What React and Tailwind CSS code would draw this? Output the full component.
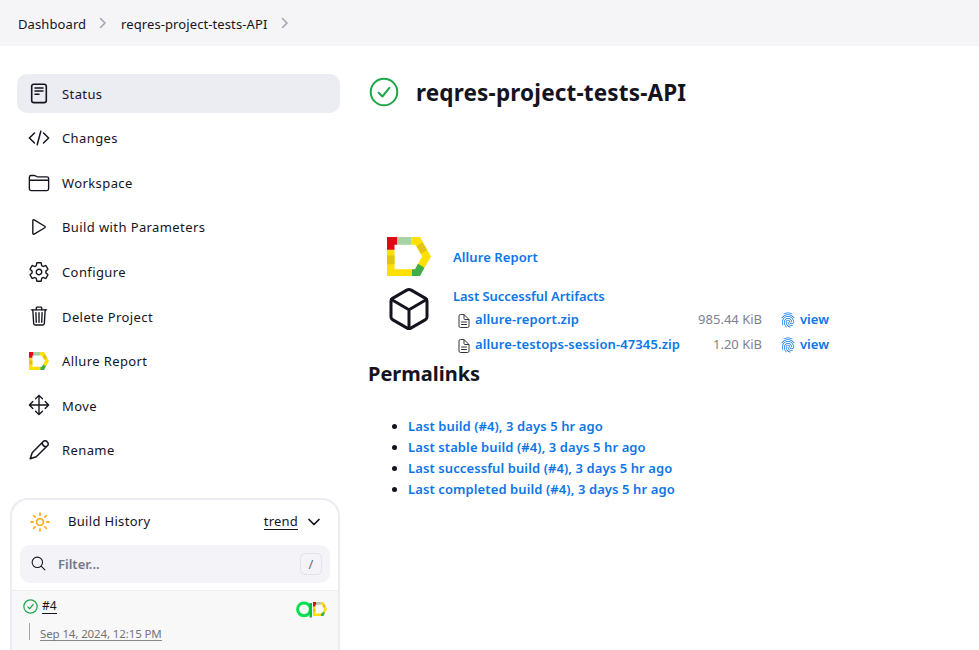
import React from "react";
import {
  IoFolderOutline,
  IoPlayOutline,
  IoSettingsOutline,
  IoTrashOutline,
  IoMoveOutline,
  IoCubeOutline,
  IoSearchOutline,
  IoSunnyOutline,
  IoDocumentTextOutline,
  IoFingerPrintOutline,
} from "react-icons/io5";

function StatusIcon() {
  return (
    <svg width="22" height="22" viewBox="0 0 22 22" fill="none" stroke="currentColor" strokeLinecap="round">
      <rect x="3.7" y="1.2" width="14.600" height="18.400" rx="2.200" strokeWidth="1.600" />
      <path d="M7 4.900h8M7 7.900h8M7 11.300h4" strokeWidth="1.500" />
    </svg>
  );
}

function CodeIcon() {
  return (
    <svg width="22" height="22" viewBox="0 0 22 22" fill="none" stroke="currentColor" strokeWidth="1.5" strokeLinecap="round" strokeLinejoin="round">
      <path d="M6.5 6 1.4 11l5.1 5M15.5 6l5.1 5-5.1 5M12.8 4.2 9.2 17.8" />
    </svg>
  );
}

function PencilIcon() {
  return (
    <svg width="22" height="22" viewBox="0 0 22 22" fill="none" stroke="currentColor" strokeWidth="1.5" strokeLinecap="round" strokeLinejoin="round">
      <path d="M2.200 19.800l2-6L15 2.800a2.600 2.600 0 0 1 4.200 0 2.600 2.600 0 0 1 0 4.200L8.200 17.800zM14.200 3.600c.200 2.200 1.800 4 4.200 4.200" />
    </svg>
  );
}

function AllureIcon({ className }) {
  return (
    <svg className={className} viewBox="0 0 44 40" preserveAspectRatio="none">
      <path fill="#ffe000" d="M0 13h7.500v20h17.500v7H0zM24.500 0h8.500L44 20 36.500 33l-6.300-4 5-9-6.700-12h-4z" />
      <path fill="#e2c412" d="M0 19h7.500v9H0zM29.500 9.500l6-4 4.500 8-6.200 3.700z" />
      <path fill="#e30613" d="M0 0h10v8H7.500v5H0z" />
      <path fill="#a6d3a3" d="M10 0h14.500v8H10z" />
      <path fill="#3fae49" d="M25 33h3l3-5.500 6.500 4L33 40h-8z" />
    </svg>
  );
}

function SuccessIcon({ className, stroke }) {
  return (
    <svg className={className} viewBox="0 0 30 30" fill="none" stroke="#1ea64b" strokeWidth={stroke} strokeLinecap="round" strokeLinejoin="round">
      <circle cx="15" cy="15" r="13.3" />
      <path d="M9.700 15.700l3.700 3.800 7-8.700" />
    </svg>
  );
}

function Chevron() {
  return (
    <svg width="8" height="12" viewBox="0 0 8 12" fill="none" stroke="#a5a5b5" strokeWidth="1.6" strokeLinecap="round" strokeLinejoin="round">
      <path d="M1.500 1.500 6 6l-4.500 4.500" />
    </svg>
  );
}

const ionicon = "size-[22px]";
const menu = [
  { label: "Status", icon: <StatusIcon />, active: true },
  { label: "Changes", icon: <CodeIcon /> },
  { label: "Workspace", icon: <IoFolderOutline className={ionicon} /> },
  { label: "Build with Parameters", icon: <IoPlayOutline className={ionicon} /> },
  { label: "Configure", icon: <IoSettingsOutline className={ionicon} /> },
  { label: "Delete Project", icon: <IoTrashOutline className={ionicon} /> },
  { label: "Allure Report", icon: <AllureIcon className="h-[18px] w-5" /> },
  { label: "Move", icon: <IoMoveOutline className={ionicon} /> },
  { label: "Rename", icon: <PencilIcon /> },
];

const artifacts = [
  { name: "allure-report.zip", size: "985.44 KiB" },
  { name: "allure-testops-session-47345.zip", size: "1.20 KiB" },
];

const permalinks = [
  "Last build (#4), 3 days 5 hr ago",
  "Last stable build (#4), 3 days 5 hr ago",
  "Last successful build (#4), 3 days 5 hr ago",
  "Last completed build (#4), 3 days 5 hr ago",
];

function BuildHistory() {
  return (
    <section className="ml-[10px] mt-[29px] h-[152px] w-[330px] overflow-hidden rounded-t-[18px] border-2 border-b-0 border-[#ebebf2]">
      <div className="flex h-[45px] items-center pb-[2px] pl-[17px] pr-[18px]">
        <IoSunnyOutline className="size-[22px] text-[#fdb022] [&_*]:[stroke-width:42px]" />
        <span className="-mt-[2px] ml-[17px] text-[13px] leading-5 tracking-[0.320px]">Build History</span>
        <a className="ml-auto mt-px border-b border-[#14141f] text-[13px] leading-[15px] tracking-[0.200px]">trend</a>
        <svg className="ml-[10px] mt-px" width="12" height="8" viewBox="0 0 12 8" fill="none" stroke="currentColor" strokeWidth="1.7" strokeLinecap="round" strokeLinejoin="round">
          <path d="M1 1.500l5 5 5-5" />
        </svg>
      </div>
      <div className="mx-2 flex h-[38px] items-center rounded-[10px] bg-[#f3f3f8] pl-[10px] pr-2">
        <IoSearchOutline className="-mt-px size-[17px]" />
        <span className="ml-[11px] text-[13px] font-semibold text-[#75758f]">Filter...</span>
        <kbd className="ml-auto flex h-[22px] w-[22px] items-center justify-center rounded-[5px] border border-[#e2e2ea] font-['Noto_Sans',sans-serif] text-[13px] text-[#696980]">/</kbd>
      </div>
      <div className="mt-[7px] h-[70px] border-t border-[#ededf0] bg-[#f8f8f8] pl-[11px] pr-[11px] pt-[7px]">
        <div className="flex h-4 items-center">
          <SuccessIcon className="size-[15px]" stroke="2.4" />
          <a className="ml-1 mt-px border-b border-[#14141f] text-xs leading-[14px]">#4</a>
          <svg className="ml-auto mt-[6px]" width="17" height="17" viewBox="0 0 17 17" fill="none" stroke="#00e04f" strokeWidth="3">
            <circle cx="8" cy="8.300" r="6.400" />
            <path d="M14.800 2v14.500" stroke="#12b83f" strokeWidth="2.500" />
          </svg>
          <AllureIcon className="mt-[6px] h-[14px] w-[14px]" />
        </div>
        <div className="ml-[6px] mt-[9px] flex h-[17px] border-l border-[#9ba7b0] pl-[10px]">
          <a className="mt-[3px] h-[15px] border-b border-[#85858a] text-[11.500px] leading-[15px] tracking-[-0.120px] text-[#737378]">Sep 14, 2024, 12:15 PM</a>
        </div>
      </div>
    </section>
  );
}

export default function App() {
  return (
    <div className="h-[650px] w-[979px] overflow-hidden bg-white font-['Noto_Sans',sans-serif] text-[#14141f]">
      <header className="flex h-[46px] items-center bg-[#f5f5f8] pl-[18px] pt-[2px] text-[13px] tracking-[0.100px]">
        <a className="w-[68px] whitespace-nowrap pt-[2px]">Dashboard</a>
        <span className="-mt-[2px] ml-[13px]"><Chevron /></span>
        <a className="ml-[14px] w-[147px] whitespace-nowrap pt-[2px]">reqres-project-tests-API</a>
        <span className="-mt-[2px] ml-[13px]"><Chevron /></span>
      </header>
      <div className="flex">
        <aside className="w-[340px] shrink-0 pt-7">
          <nav className="ml-[17px] flex flex-col gap-[5.560px]">
            {menu.map((m) => (
              <a key={m.label} className={`flex h-[39px] items-center rounded-[10px] pl-[11px] ${m.active ? "bg-[#ecedf3]" : ""}`}>
                <span className="flex w-[22px] justify-center">{m.icon}</span>
                <span className="ml-3 pt-[0.600px] text-[13px] leading-5 tracking-[0.400px]">{m.label}</span>
              </a>
            ))}
          </nav>
          <BuildHistory />
        </aside>
        <main className="pl-7 pt-[31px]">
          <div className="flex h-[30px] items-center">
            <SuccessIcon className="size-[30px] ml-[1px]" stroke="2" />
            <h1 className="ml-[17px] pt-[2px] text-[22.500px] font-bold leading-[30px] tracking-[0.160px]">reqres-project-tests-API</h1>
          </div>
          <div className="mt-[130px] flex h-10 items-center">
            <AllureIcon className="-mt-px ml-[19px] h-[39px] w-11" />
            <a className="ml-[22px] pt-px text-[13px] font-semibold tracking-[0.080px] text-[#0b76e8]">Allure Report</a>
          </div>
          <div className="mt-[8px] flex h-[72px]">
            <IoCubeOutline className="ml-[17px] size-12" />
            <div className="ml-5 pt-px text-[13px] font-semibold text-[#0b76e8]">
              <a className="block h-[21px] leading-5 tracking-[-0.050px]">Last Successful Artifacts</a>
              {artifacts.map((a) => (
                <div key={a.name} className="flex h-[25px] items-center">
                  <IoDocumentTextOutline className="ml-[3px] mt-[2px] size-4 text-[#33333c]" />
                  <a className="ml-[3px] w-[210px] whitespace-nowrap tracking-[0.110px]">{a.name}</a>
                  <span className="w-[77px] text-right font-normal text-[#808090]">{a.size}</span>
                  <IoFingerPrintOutline className="ml-[18px] size-4" />
                  <a className="ml-1">view</a>
                </div>
              ))}
            </div>
          </div>
          <h2 className="mt-[2px] h-[30px] text-[20px] font-bold leading-[30px]">Permalinks</h2>
          <ul className="mt-[27px] list-disc pl-10 text-[13px] font-semibold leading-[21px] tracking-[0.100px]">
            {permalinks.map((p) => (
              <li key={p}><a className="text-[#0b76e8]">{p}</a></li>
            ))}
          </ul>
        </main>
      </div>
    </div>
  );
}
